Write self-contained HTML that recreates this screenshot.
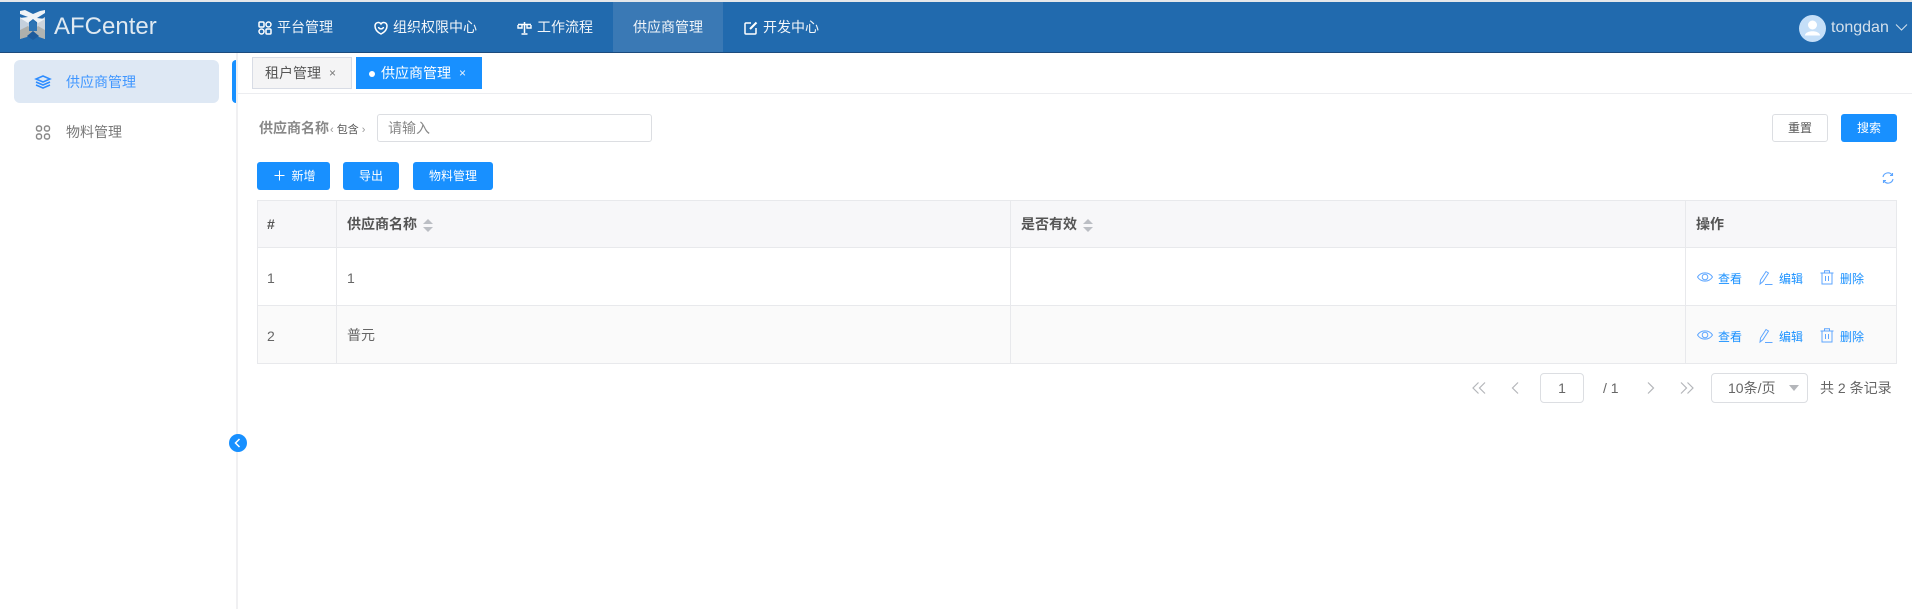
<!DOCTYPE html>
<html lang="zh"><head><meta charset="utf-8"><style>
*{box-sizing:border-box}
html,body{margin:0;padding:0}
body{width:1912px;height:609px;position:relative;overflow:hidden;background:#fff;font-family:"Liberation Sans","Noto Sans CJK SC",sans-serif;font-size:14px;color:#666}
.a{position:absolute;white-space:nowrap}
svg{position:absolute;display:block;overflow:visible}
.t{line-height:20px}
.btn{position:absolute;border-radius:3px;background:#1890ff;color:#fff;font-size:12px;text-align:center;line-height:28px;height:28px}
.hl{position:absolute;background:#e8e9ec}
.n{color:#f2f6fa;font-size:14px;line-height:20px;top:17px}
.op{color:#1890ff;font-size:12px;line-height:16px}
.ic{fill:none;stroke:#fff;stroke-width:1.5}
.ib{fill:none;stroke:#5ea6ff;stroke-width:1}
.pg{fill:none;stroke:#b4b6ba;stroke-width:1.2}
</style></head><body>
<div class="a" style="left:0;top:0;width:1912px;height:2px;background:#e4e7ea"></div>
<div class="a" style="left:0;top:2px;width:1912px;height:50px;background:#216aae"></div>
<div class="a" style="left:0;top:52px;width:1912px;height:1px;background:#1c4b7d"></div>
<div class="a" style="left:613px;top:2px;width:110px;height:50px;background:#3a79b5"></div>
<svg style="left:0;top:0" width="60" height="50" viewBox="0 0 60 50">
<path d="M20 17 L20 39 L29 36 L29 22Z" fill="#c4d0dc"/><path d="M45 17 L45 39 L37 36 L37 22Z" fill="#ccd4dc"/>
<path d="M20 30 L20 39 L27 37 L33 31 L28 26Z" fill="#aeb0ac"/><path d="M45 30 L45 39 L39 37 L33 31 L38 26Z" fill="#b0b4b2"/>
<path d="M27 36 L33 31 L39 36 L33 40Z" fill="#1d5b9c"/><path d="M29 24 L33 20 L37 24 L37 31 L33 31 L29 31Z" fill="#2d74b4"/>
<path d="M20 11 L25 10 L33 14 L40 11 L45 10 L45 13 L37 18 L45 19 L38 23 L33 19 L28 23 L20 18 L28 17 L20 14Z" fill="#eef3f7"/>
</svg>
<div class="a" style="left:54px;top:12px;font-size:24px;line-height:30px;color:#dfe9f1">AFCenter</div>
<svg style="left:258px;top:21px" width="14" height="14" viewBox="0 0 14 14" class="ic"><rect x="1" y="1" width="5" height="5" rx="1"/><rect x="8" y="1" width="5" height="5" rx="2.5"/><rect x="1" y="8" width="5" height="5" rx="2.5"/><rect x="8" y="8" width="5" height="5" rx="1"/></svg>
<div class="a n" style="left:277px">平台管理</div>
<svg style="left:374px;top:21px" width="14" height="14" viewBox="0 0 14 14" class="ic"><path d="M7 13 C3 11 1 8 1 5 C1 2.500 3 1.200 4.800 1.500 C5.800 1.700 6.500 2.200 7 3 C7.500 2.200 8.200 1.700 9.200 1.500 C11 1.200 13 2.500 13 5 C13 8 11 11 7 13Z"/><path d="M4.500 6 C5 8.500 9 8.500 9.500 6"/></svg>
<div class="a n" style="left:393px">组织权限中心</div>
<svg style="left:517px;top:21px" width="15" height="14" viewBox="0 0 15 14" class="ic"><path d="M7.500 1 V12 M4.500 13 H10.500 M1 3.500 H14"/><path d="M1 4 V7 H5 V4 M10 4 V7 H14 V4" stroke-width="1.400"/></svg>
<div class="a n" style="left:537px">工作流程</div>
<div class="a n" style="left:633px">供应商管理</div>
<svg style="left:744px;top:21px" width="14" height="14" viewBox="0 0 14 14" class="ic"><path d="M7 2 H2 Q1 2 1 3 V12 Q1 13 2 13 H11 Q12 13 12 12 V7"/><path d="M6 8 L12.500 1.500" stroke-width="2"/></svg>
<div class="a n" style="left:763px">开发中心</div>
<svg style="left:1799px;top:15px" width="27" height="27" viewBox="0 0 27 27"><circle cx="13.500" cy="13.500" r="13.500" fill="#c5dff8"/><circle cx="13.500" cy="10" r="4.500" fill="#fff"/><path d="M6 20 C7 15 20 15 21 20 L21 20.500 H6Z" fill="#fff"/></svg>
<div class="a" style="left:1831px;top:18px;font-size:16px;line-height:20px;color:#d3e0ec">tongdan</div>
<svg style="left:1895px;top:24px" width="13" height="7" viewBox="0 0 13 7" fill="none" stroke="#d3e0ec" stroke-width="1"><path d="M1 .5 L6.500 6 L12 .5"/></svg>

<div class="a" style="left:236px;top:53px;width:2px;height:556px;background:#f0f0f2"></div>
<div class="a" style="left:14px;top:60px;width:205px;height:43px;background:#dee8f4;border-radius:6px"></div>
<div class="a" style="left:232px;top:60px;width:4px;height:43px;background:#1890ff;border-radius:4px 0 0 4px"></div>
<svg style="left:35px;top:75px" width="16" height="14" viewBox="0 0 16 14" fill="none" stroke="#2d8cff" stroke-width="1.500"><path d="M8 1 L15 4 L8 7 L1 4Z"/><path d="M1 7 L8 10 L15 7"/><path d="M1 10 L8 13 L15 10"/></svg>
<div class="a t" style="left:66px;top:72px;color:#3f96ff">供应商管理</div>
<svg style="left:35px;top:125px" width="16" height="15" viewBox="0 0 16 15" fill="none" stroke="#888" stroke-width="1.400"><rect x="1.500" y="1" width="5" height="5" rx="2"/><rect x="9.500" y="1" width="5" height="5" rx="2"/><rect x="1.500" y="9" width="5" height="5" rx="2"/><rect x="9.500" y="9" width="5" height="5" rx="2"/></svg>
<div class="a t" style="left:66px;top:122px;color:#777">物料管理</div>
<svg style="left:229px;top:434px" width="18" height="18" viewBox="0 0 18 18"><circle cx="9" cy="9" r="9" fill="#1890ff"/><path d="M10.500 5 L6.500 9 L10.500 13" fill="none" stroke="#fff" stroke-width="1.500"/></svg>

<div class="a" style="left:238px;top:93px;width:1674px;height:1px;background:#ecedf0"></div>
<div class="a" style="left:252px;top:57px;width:100px;height:32px;background:#f4f4f5;border:1px solid #d8dce5"></div>
<div class="a" style="left:265px;top:63px;font-size:14px;line-height:20px;color:#555">租户管理</div>
<div class="a" style="left:329px;top:63px;font-size:12px;line-height:20px;color:#777">×</div>
<div class="a" style="left:356px;top:57px;width:126px;height:32px;background:#1890ff"></div>
<div class="a" style="left:369px;top:71px;width:6px;height:6px;border-radius:50%;background:#fff"></div>
<div class="a" style="left:381px;top:63px;font-size:14px;line-height:20px;color:#fff">供应商管理</div>
<div class="a" style="left:459px;top:63px;font-size:12px;line-height:20px;color:#e8f3ff">×</div>

<div class="a t" style="left:259px;top:118px;font-weight:700;color:#888">供应商名称</div>
<div class="a" style="left:330px;top:122px;font-size:11px;line-height:16px;color:#555"><span style="color:#999">‹</span> 包含 <span style="color:#999">›</span></div>
<div class="a" style="left:377px;top:114px;width:275px;height:28px;border:1px solid #dcdee2;border-radius:3px"></div>
<div class="a t" style="left:388px;top:118px;color:#888">请输入</div>
<div class="a" style="left:1772px;top:114px;width:56px;height:28px;border:1px solid #dcdee2;border-radius:3px;text-align:center;font-size:12px;line-height:26px;color:#555">重置</div>
<div class="btn" style="left:1841px;top:114px;width:56px">搜索</div>
<div class="btn" style="left:257px;top:162px;width:73px;padding-left:20px">新增</div>
<svg style="left:274px;top:170px" width="11" height="11" viewBox="0 0 11 11" stroke="#fff" stroke-width="1"><path d="M5.500 .5 V10.500 M.5 5.500 H10.500"/></svg>
<div class="btn" style="left:343px;top:162px;width:56px">导出</div>
<div class="btn" style="left:413px;top:162px;width:80px">物料管理</div>
<svg style="left:1882px;top:172px" width="12" height="12" viewBox="0 0 12 12" fill="none" stroke="#5ea6ff" stroke-width="1.100"><path d="M1 5 A5 5 0 0 1 10 3 M11 7 A5 5 0 0 1 2 9"/><path d="M10.500 1 V3.500 H8 M1.500 11 V8.500 H4"/></svg>

<div class="a" style="left:257px;top:200px;width:1639px;height:47px;background:#f7f7f9"></div>
<div class="a" style="left:257px;top:305px;width:1639px;height:58px;background:#fafafa"></div>
<div class="hl" style="left:257px;top:200px;width:1640px;height:1px"></div>
<div class="hl" style="left:257px;top:247px;width:1640px;height:1px"></div>
<div class="hl" style="left:257px;top:305px;width:1640px;height:1px"></div>
<div class="hl" style="left:257px;top:363px;width:1640px;height:1px"></div>
<div class="hl" style="left:257px;top:200px;width:1px;height:164px"></div>
<div class="hl" style="left:336px;top:200px;width:1px;height:164px"></div>
<div class="hl" style="left:1010px;top:200px;width:1px;height:164px"></div>
<div class="hl" style="left:1685px;top:200px;width:1px;height:164px"></div>
<div class="hl" style="left:1896px;top:200px;width:1px;height:164px"></div>

<div class="a t" style="left:267px;top:214px;font-size:14px;font-weight:700;color:#555">#</div>
<div class="a t" style="left:347px;top:214px;font-weight:700;color:#555">供应商名称</div>
<svg style="left:423px;top:219px" width="10" height="13" viewBox="0 0 10 13" fill="#bbbec4"><path d="M5 0 L10 5 H0Z"/><path d="M0 8 H10 L5 13Z"/></svg>
<div class="a t" style="left:1021px;top:214px;font-weight:700;color:#555">是否有效</div>
<svg style="left:1083px;top:219px" width="10" height="13" viewBox="0 0 10 13" fill="#bbbec4"><path d="M5 0 L10 5 H0Z"/><path d="M0 8 H10 L5 13Z"/></svg>
<div class="a t" style="left:1696px;top:214px;font-weight:700;color:#555">操作</div>
<div class="a t" style="left:267px;top:268px;font-size:14px;color:#666">1</div>
<div class="a t" style="left:347px;top:268px;font-size:14px;color:#666">1</div>
<div class="a t" style="left:267px;top:326px;font-size:14px;color:#666">2</div>
<div class="a t" style="left:347px;top:325px;color:#666">普元</div>

<svg style="left:1697px;top:271px" width="16" height="12" viewBox="0 0 16 12" class="ib"><path d="M.5 6 C4 .5 12 .5 15.500 6 C12 11.500 4 11.500 .5 6Z"/><circle cx="8" cy="6" r="2.800"/></svg>
<div class="a op" style="left:1718px;top:271px">查看</div>
<svg style="left:1759px;top:270px" width="14" height="15" viewBox="0 0 14 15" class="ib"><path d="M1 14 L1.500 10 L7 1.500 L9.500 3 L4 11.500Z"/><path d="M6 14.500 H13.500"/></svg>
<div class="a op" style="left:1779px;top:271px">编辑</div>
<svg style="left:1820px;top:270px" width="14" height="15" viewBox="0 0 14 15" class="ib"><path d="M.5 3 H13.500 M4.500 3 V.8 H9.500 V3 M2 3 V14 H12 V3 M5.500 6 V11 M8.500 6 V11"/></svg>
<div class="a op" style="left:1840px;top:271px">删除</div>

<svg style="left:1697px;top:329px" width="16" height="12" viewBox="0 0 16 12" class="ib"><path d="M.5 6 C4 .5 12 .5 15.500 6 C12 11.500 4 11.500 .5 6Z"/><circle cx="8" cy="6" r="2.800"/></svg>
<div class="a op" style="left:1718px;top:329px">查看</div>
<svg style="left:1759px;top:328px" width="14" height="15" viewBox="0 0 14 15" class="ib"><path d="M1 14 L1.500 10 L7 1.500 L9.500 3 L4 11.500Z"/><path d="M6 14.500 H13.500"/></svg>
<div class="a op" style="left:1779px;top:329px">编辑</div>
<svg style="left:1820px;top:328px" width="14" height="15" viewBox="0 0 14 15" class="ib"><path d="M.5 3 H13.500 M4.500 3 V.8 H9.500 V3 M2 3 V14 H12 V3 M5.500 6 V11 M8.500 6 V11"/></svg>
<div class="a op" style="left:1840px;top:329px">删除</div>

<svg style="left:1472px;top:382px" width="14" height="12" viewBox="0 0 14 12" class="pg"><path d="M6.500 .5 L1 6 L6.500 11.500 M13 .5 L7.500 6 L13 11.500"/></svg>
<svg style="left:1511px;top:382px" width="8" height="12" viewBox="0 0 8 12" class="pg"><path d="M7 .5 L1.500 6 L7 11.500"/></svg>
<div class="a" style="left:1540px;top:373px;width:44px;height:30px;border:1px solid #dcdee2;border-radius:4px;text-align:center;font-size:14px;line-height:28px;color:#666">1</div>
<div class="a t" style="left:1603px;top:378px;color:#666">/ 1</div>
<svg style="left:1647px;top:382px" width="8" height="12" viewBox="0 0 8 12" class="pg"><path d="M1 .5 L6.500 6 L1 11.500"/></svg>
<svg style="left:1680px;top:382px" width="14" height="12" viewBox="0 0 14 12" class="pg"><path d="M1 .5 L6.500 6 L1 11.500 M7.500 .5 L13 6 L7.500 11.500"/></svg>
<div class="a" style="left:1711px;top:373px;width:97px;height:30px;border:1px solid #dcdee2;border-radius:4px"></div>
<div class="a t" style="left:1728px;top:378px;color:#666">10条/页</div>
<svg style="left:1789px;top:385px" width="10" height="6" viewBox="0 0 10 6" fill="#b4b6ba"><path d="M0 0 H10 L5 6Z"/></svg>
<div class="a t" style="left:1820px;top:378px;color:#666">共 2 条记录</div>
</body></html>
